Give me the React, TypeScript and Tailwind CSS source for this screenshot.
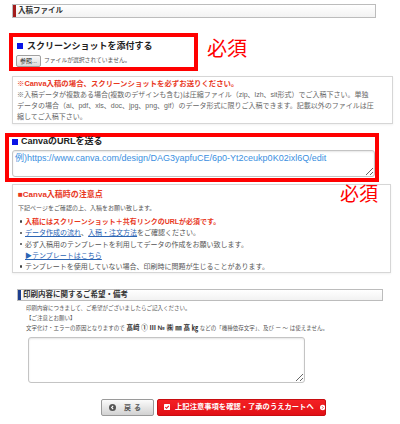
import type { ReactNode } from "react";

function SectionHeading({ label, bar, className }: { label: string; bar: string; className: string }) {
  return (
    <div className={`flex items-stretch border border-[#bcbcbc] bg-gradient-to-b from-white to-[#f2f2f2] ${className}`}>
      <span className={`w-[3px] ${bar}`} />
      <span className="self-center pl-[2px] text-[7.5px] font-bold leading-none text-[#333]">{label}</span>
    </div>
  );
}

function Bullet({ children }: { children: ReactNode }) {
  return (
    <li className="flex items-center">
      <span className="flex w-[7px]">
        <span className="ml-[1.5px] h-[2.5px] w-[2.5px] rounded-full bg-[#444]" />
      </span>
      <span className="whitespace-nowrap">{children}</span>
    </li>
  );
}

export default function App() {
  return (
    <div className="flex h-[424px] w-[400px] flex-col overflow-hidden bg-white font-['Liberation_Sans','Noto_Sans_CJK_JP',sans-serif] text-[#555]">
      <SectionHeading label="入稿ファイル" bar="bg-[#a31c1c]" className="ml-[12px] mt-[4px] h-[14px] w-[364px]" />

      {/* screenshot upload */}
      <div className="mt-[15px] flex items-start">
        <div className="ml-[9px] flex h-[38px] w-[189px] flex-col border-4 border-[#ff0000] pl-[3px] pt-[3px]">
          <div className="flex h-[12px] items-center gap-[4px] text-[9px] font-bold leading-none text-[#222]">
            <span className="ml-[1px] h-[6px] w-[6px] bg-[#0a14e6]" />
            スクリーンショットを添付する
          </div>
          <div className="mt-[3px] flex items-center gap-[3px]">
            <span className="flex h-[12px] w-[25px] items-center justify-center rounded-[2px] border border-[#a0a0a0] bg-gradient-to-b from-[#fafafa] to-[#dadada] text-[6px] leading-none text-[#222]">
              参照...
            </span>
            <span className="text-[5.8px] leading-none text-[#555]">ファイルが選択されていません。</span>
          </div>
        </div>
        <span className="ml-[9px] mt-[6px] text-[20px] leading-[20px] text-[#ff0000]">必須</span>
      </div>

      <div className="ml-[12px] mt-[5px] h-[48px] w-[381px] whitespace-nowrap border border-[#d6d6d6] pl-[4px] pt-[1px] text-[7px] leading-[11px] text-[#666] shadow-[0_1px_2px_rgba(0,0,0,0.06)]">
        <p className="text-[7.4px] font-bold text-[#e8381e]">※Canva入稿の場合、スクリーンショットを必ずお送りください。</p>
        <p>
          ※入稿データが複数ある場合(複数のデザインも含む)は圧縮ファイル（zip、lzh、sit形式）でご入稿下さい。単独
          <br />
          データの場合（ai、pdf、xls、doc、jpg、png、gif）のデータ形式に限りご入稿できます。記載以外のファイルは圧
          <br />
          縮してご入稿下さい。
        </p>
      </div>

      {/* canva url */}
      <div className="ml-[5px] mt-[9px] flex h-[49px] w-[374px] flex-col border-4 border-[#ff0000]">
        <div className="flex h-[9px] items-center gap-[3px] pl-[3px] text-[9px] font-bold leading-none text-[#222]">
          <span className="h-[6px] w-[6px] bg-[#0a14e6]" />
          CanvaのURLを送る
        </div>
        <textarea
          readOnly
          placeholder="例)https://www.canva.com/design/DAG3yapfuCE/6p0-Yt2ceukp0K02ixl6Q/edit"
          className="ml-[3px] mt-[4px] h-[27px] w-[363px] rounded-[3px] border border-[#c4c4c4] bg-white px-[2px] pt-[2px] text-[9px] leading-[11px] shadow-[inset_0_1px_2px_rgba(0,0,0,0.1)] outline-none placeholder:text-[#3b8fe0]"
        />
      </div>

      <div className="relative ml-[12px] mt-[2px] h-[89px] w-[379px] border border-[#d6d6d6] pl-[5px] pt-[5px] text-[#555] shadow-[0_1px_2px_rgba(0,0,0,0.06)]">
        <span className="absolute left-[327px] top-0 text-[19px] leading-[20px] text-[#ff0000]">必須</span>
        <p className="text-[8px] font-bold leading-[10px] text-[#e8381e]">■Canva入稿時の注意点</p>
        <p className="mt-[3px] text-[6px] leading-[10px]">下記ページをご確認の上、入稿をお願い致します。</p>
        <ul className="mt-[3px] text-[7px] leading-[11.25px]">
          <Bullet>
            <span className="font-bold text-[#e8381e]">入稿にはスクリーンショット＋共有リンクのURLが必須です。</span>
          </Bullet>
          <Bullet>
            <span className="text-[#2a64b4] underline">データ作成の流れ</span>、
            <span className="text-[#2a64b4] underline">入稿・注文方法</span>をご確認ください。
          </Bullet>
          <Bullet>必ず入稿用のテンプレートを利用してデータの作成をお願い致します。</Bullet>
          <li className="pl-[7px] text-[#2a64b4] underline">▶テンプレートはこちら</li>
          <Bullet>テンプレートを使用していない場合、印刷時に問題が生じることがあります。</Bullet>
        </ul>
      </div>

      <SectionHeading label="印刷内容に関するご希望・備考" bar="bg-[#1d3f8f]" className="ml-[17px] mt-[16px] h-[12px] w-[366px]" />

      <div className="ml-[26px] mt-[3px] whitespace-nowrap text-[5.5px] leading-[9.5px] text-[#555]">
        <p>印刷内容につきまして、ご希望がございましたらご記入ください。</p>
        <p>【ご注意とお願い】</p>
        <p>
          文字化け・エラーの原因となりますので{" "}
          <span className="text-[6.5px] font-bold text-[#333]">髙﨑 ① Ⅲ № ㈱ ㎜ 髙 ㎏</span> などの「機種依存文字」、及び ー ～ は使えません。
        </p>
      </div>

      <textarea className="ml-[28px] mt-[3px] h-[46px] w-[277px] rounded-[3px] border border-[#c4c4c4] bg-white shadow-[inset_0_1px_2px_rgba(0,0,0,0.1)] outline-none" />

      {/* actions */}
      <div className="mt-[16px] flex gap-[3px] pl-[101px]">
        <button className="flex h-[17px] w-[53px] items-center gap-[8px] rounded-[2px] border border-[#9a9a9a] bg-gradient-to-b from-[#fbfbfb] to-[#d2d2d2] pl-[7px]">
          <svg viewBox="0 0 10 10" className="h-[7px] w-[7px]">
            <circle cx="5" cy="5" r="5" fill="#555" />
            <path d="M5.9 2.8 3.8 5 5.9 7.2" stroke="#fff" strokeWidth="1.6" fill="none" />
          </svg>
          <span className="text-[7px] font-bold leading-none tracking-[3px] text-[#555]">戻る</span>
        </button>
        <button className="flex h-[17px] w-[169px] items-center rounded-[2px] border border-[#c80c10] bg-gradient-to-b from-[#f42024] to-[#e10f15] pl-[6px]">
          <svg viewBox="0 0 10 10" className="h-[8px] w-[8px]">
            <rect width="10" height="10" rx="1" fill="#fff" />
            <path d="M2.2 5.1 4.2 7.1 7.9 3" stroke="#e8141c" strokeWidth="1.7" fill="none" />
          </svg>
          <span className="ml-[5px] whitespace-nowrap text-[7.3px] font-bold leading-none text-white">上記注意事項を確認・了承のうえカートへ</span>
          <svg viewBox="0 0 10 10" className="ml-[6px] h-[7px] w-[7px]">
            <circle cx="5" cy="5" r="5" fill="#fff" />
            <path d="M4.1 2.8 6.2 5 4.1 7.2" stroke="#e8141c" strokeWidth="1.6" fill="none" />
          </svg>
        </button>
      </div>
    </div>
  );
}
